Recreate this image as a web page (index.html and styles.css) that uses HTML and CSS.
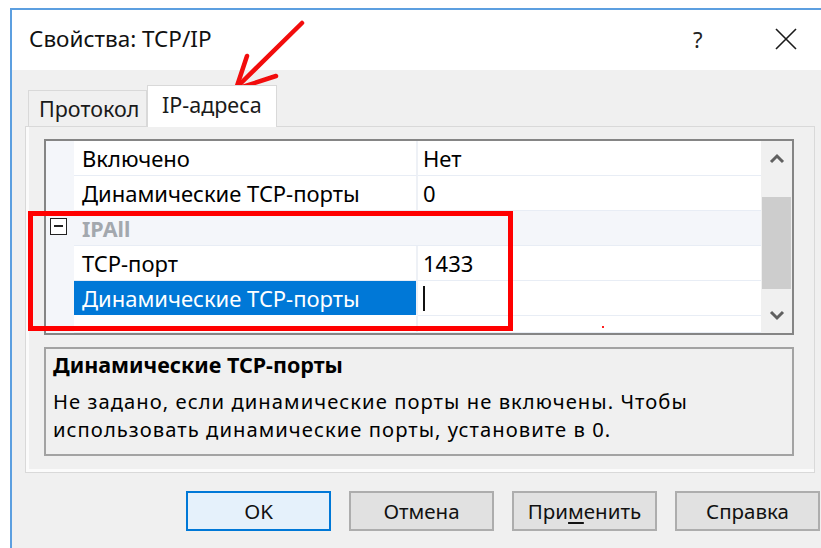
FILE: index.html
```html
<!DOCTYPE html>
<html lang="ru">
<head>
<meta charset="utf-8">
<title>Свойства: TCP/IP</title>
<link rel="stylesheet" href="styles.css">
</head>
<body>
<div class="window">
  <div class="titlebar">
    <span class="title">Свойства: TCP/IP</span>
    <span class="help">?</span>
    <svg class="close" width="22" height="22" viewBox="0 0 22 22">
      <path d="M1 1 L21 21 M21 1 L1 21" stroke="#1a1a1a" stroke-width="1.6" fill="none"/>
    </svg>
  </div>
  <div class="client">
    <div class="tabs">
      <div class="tab">Протокол</div>
      <div class="tab active">IP-адреса</div>
    </div>
    <div class="panel">
      <div class="grid">
        <div class="rows">
          <div class="row">
            <div class="gutter"></div>
            <div class="name">Включено</div>
            <div class="value">Нет</div>
          </div>
          <div class="row">
            <div class="gutter"></div>
            <div class="name">Динамические TCP-порты</div>
            <div class="value">0</div>
          </div>
          <div class="row category">
            <div class="gutter">
              <span class="toggle"></span>
            </div>
            <div class="cat-name">IPAll</div>
          </div>
          <div class="row">
            <div class="gutter"></div>
            <div class="name">TCP-порт</div>
            <div class="value">1433</div>
          </div>
          <div class="row">
            <div class="gutter"></div>
            <div class="name selected">Динамические TCP-порты</div>
            <div class="value"><span class="caret"></span></div>
          </div>
          <div class="row last">
            <div class="gutter"></div>
            <div class="name"></div>
            <div class="value"></div>
          </div>
        </div>
        <div class="scrollbar">
          <svg class="arrow" width="16" height="11" viewBox="0 0 16 11">
            <path d="M2 9 L8 3 L14 9" stroke="#606060" stroke-width="3" fill="none"/>
          </svg>
          <div class="track"><div class="thumb"></div></div>
          <svg class="arrow" width="16" height="11" viewBox="0 0 16 11">
            <path d="M2 2 L8 8 L14 2" stroke="#606060" stroke-width="3" fill="none"/>
          </svg>
        </div>
      </div>
      <div class="desc">
        <div class="desc-title">Динамические TCP-порты</div>
        <div class="desc-line">Не задано, если динамические порты не включены. Чтобы</div>
        <div class="desc-line">использовать динамические порты, установите в 0.</div>
      </div>
    </div>
    <div class="buttons">
      <div class="btn default">OK</div>
      <div class="btn">Отмена</div>
      <div class="btn">При<u>м</u>енить</div>
      <div class="btn">Справка</div>
    </div>
  </div>
</div>

<!-- annotation layer drawn over the dialog -->
<div class="mark-box"></div>
<div class="mark-dot"></div>
<svg class="mark-arrow" width="821" height="120" viewBox="0 0 821 120">
  <path d="M302 23 L238 86" stroke="#f20d0d" stroke-width="4.5" stroke-linecap="round" fill="none"/>
  <path d="M247 56 L236 89 L276 76" stroke="#f20d0d" stroke-width="4.5" stroke-linecap="round" stroke-linejoin="round" fill="none"/>
</svg>
</body>
</html>
```
FILE: styles.css
```css
html, body {
  margin: 0;
  padding: 0;
  background: #ffffff;
  overflow: hidden;
  width: 821px;
  height: 548px;
}

body {
  font-family: "Noto Sans", "Open Sans", sans-serif;
  font-size: 22px;
  color: #000;
}

.window {
  margin: 8px 0 0 10px;
  width: 830px;
  height: 560px;
  border-top: 2px solid #5c9fe0;
  border-left: 2px solid #5c9fe0;
  background: #f0f0f0;
}

/* ---------- title bar ---------- */
.titlebar {
  height: 60px;
  background: #fff;
  display: flex;
  align-items: center;
  padding-left: 17px;
  padding-bottom: 3px;
  box-sizing: border-box;
}

.title {
  font-size: 22.5px;
  color: #111;
}

.help {
  margin-left: auto;
  font-size: 22px;
  color: #222;
  width: 12px;
}

.close {
  margin-left: 70px;
  margin-right: 45px;
}

/* ---------- tabs ---------- */
.client {
  padding: 15px 0 0 13px;
}

.tabs {
  display: flex;
  align-items: flex-end;
  height: 41px;
  margin-left: 3px;
  font-size: 21.5px;
}

.tab {
  height: 36px;
  box-sizing: border-box;
  border: 1px solid #d9d9d9;
  border-bottom: none;
  background: #f0f0f0;
  padding: 0 0 0 10px;
  width: 119px;
  display: flex;
  align-items: center;
  color: #1a1a1a;
}

.tab.active {
  height: 42px;
  width: 130px;
  background: #fff;
  padding: 0 0 4px 14px;
  margin-bottom: -1px;
  position: relative;
  z-index: 1;
  border-color: #d9d9d9;
}

/* ---------- tab page ---------- */
.panel {
  width: 790px;
  height: 347px;
  box-sizing: border-box;
  border: 1px solid #d9d9d9;
  background: #f0f0f0;
  box-shadow: inset 3px -3px 0 #fbfbfb;
  padding: 12px 0 0 18px;
}

.grid {
  width: 750px;
  height: 196px;
  box-sizing: border-box;
  border: 2px solid #858585;
  display: flex;
  background: #fff;
}

.rows {
  width: 715px;
  display: flex;
  flex-direction: column;
  overflow: hidden;
}

.row {
  display: flex;
  height: 35px;
  flex: none;
}

.row.last {
  flex: 1;
}

.gutter {
  width: 28px;
  flex: none;
  background: #f4f6fa;
  position: relative;
}

.name,
.value {
  display: flex;
  align-items: center;
  box-sizing: border-box;
  border-bottom: 1px solid #e8edf5;
}

.name {
  width: 344px;
  flex: none;
  padding-left: 8px;
  border-right: 2px solid #eef1f6;
  white-space: nowrap;
}

.value {
  flex: 1;
  padding-left: 5px;
}

.name.selected {
  background: #0078d7;
  color: #fff;
  border-bottom-color: #fff;
}

.caret {
  display: block;
  width: 2px;
  height: 25px;
  background: #111;
}

.row.category {
  background: #f4f6fa;
}

.cat-name {
  flex: 1;
  display: flex;
  align-items: center;
  padding-left: 8px;
  font-weight: bold;
  font-size: 21.5px;
  color: #a3a8ae;
  border-bottom: 1px solid #e8edf5;
}

.toggle {
  position: absolute;
  left: 4px;
  top: 7px;
  width: 17px;
  height: 17px;
  box-sizing: border-box;
  border: 1.5px solid #222;
  background: #fff;
}

.toggle::after {
  content: "";
  position: absolute;
  left: 3px;
  right: 3px;
  top: 6px;
  height: 1.5px;
  background: #222;
}

/* ---------- scroll bar ---------- */
.scrollbar {
  flex: 1;
  background: #f0f0f0;
  display: flex;
  flex-direction: column;
  align-items: center;
}

.scrollbar .arrow {
  flex: none;
  margin: 12px 0;
}

.track {
  flex: 1;
  width: 100%;
  position: relative;
}

.thumb {
  margin: 21px 1px 0 1px;
  height: 92px;
  background: #cdcdcd;
}

/* ---------- description ---------- */
.desc {
  width: 750px;
  height: 109px;
  box-sizing: border-box;
  margin-top: 12px;
  border: 2px solid #a3a3a3;
  padding: 3px 0 0 7px;
}

.desc-title {
  font-weight: bold;
  font-size: 21.5px;
  line-height: 25px;
  margin-bottom: 11px;
}

.desc-line {
  font-size: 20.2px;
  letter-spacing: 1.05px;
  line-height: 27.5px;
}

/* ---------- buttons ---------- */
.buttons {
  display: flex;
  gap: 18px;
  margin: 18px 0 0 161px;
}

.btn {
  width: 145px;
  height: 40px;
  box-sizing: border-box;
  border: 2px solid #adadad;
  background: #e1e1e1;
  display: flex;
  align-items: center;
  justify-content: center;
  color: #111;
  font-size: 20.5px;
}

.btn.default {
  border-color: #0078d7;
  background: #e5f1fb;
}

.btn u {
  text-underline-offset: 3px;
}

/* ---------- annotation layer ---------- */
.mark-box {
  position: absolute;
  left: 28px;
  top: 211px;
  width: 485px;
  height: 120px;
  box-sizing: border-box;
  border: 5px solid #ff0000;
}

.mark-dot {
  position: absolute;
  left: 602px;
  top: 326px;
  width: 2px;
  height: 2px;
  background: #ff2020;
}

.mark-arrow {
  position: absolute;
  left: 0;
  top: 0;
}
```
